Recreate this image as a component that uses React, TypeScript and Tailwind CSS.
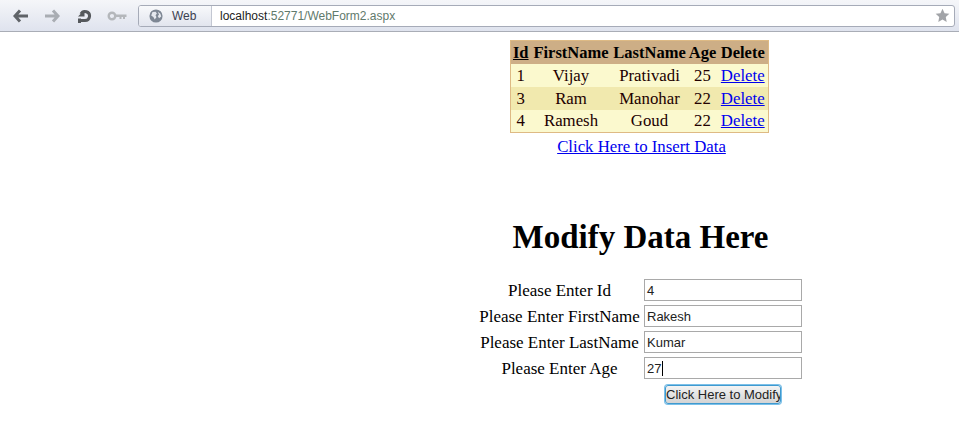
const serif = "font-['Liberation_Serif',serif]";

const rows = [
  { id: "1", first: "Vijay", last: "Prativadi", age: "25", alt: false },
  { id: "3", first: "Ram", last: "Manohar", age: "22", alt: true },
  { id: "4", first: "Ramesh", last: "Goud", age: "22", alt: false },
];

const fields = [
  { label: "Please Enter Id", value: "4" },
  { label: "Please Enter FirstName", value: "Rakesh" },
  { label: "Please Enter LastName", value: "Kumar" },
  { label: "Please Enter Age", value: "27", caret: true },
];

function Toolbar() {
  return (
    <div className="flex h-[32px] items-center border-b border-[#a9adb6] bg-gradient-to-b from-[#f5f6f9] to-[#dfe3ee] pl-[13px] pr-[4px]">
      <svg width="16" height="14" viewBox="0 0 16 14" className="text-[#5f6368]">
        <path d="M7 1.500 2 7l5 5.500M2.500 7H15" fill="none" stroke="currentColor" strokeWidth="3" />
      </svg>
      <svg width="16" height="14" viewBox="0 0 16 14" className="ml-[15px] text-[#a9adb3]">
        <path d="M9 1.500 14 7l-5 5.500M13.500 7H1" fill="none" stroke="currentColor" strokeWidth="3" />
      </svg>
      <svg width="14" height="14" viewBox="0 0 14 14" className="ml-[18px] text-[#55585c]">
        <path d="M3 5A4.500 4.500 0 1 1 7 11.500H2" fill="none" stroke="currentColor" strokeWidth="3" />
        <path d="M6.500 1v6.500H0z" fill="currentColor" />
        <path d="M0 9.500h3v4.500H0z" fill="currentColor" />
      </svg>
      <svg width="20" height="10" viewBox="0 0 20 10" className="ml-[15px] text-[#b4b7bb]">
        <circle cx="5" cy="5" r="3.300" fill="none" stroke="currentColor" strokeWidth="2.400" />
        <path d="M8 3.500h11.500v2.500h-1.500v2h-2V6h-1.500v2h-2V6H8z" fill="currentColor" />
      </svg>
      <div className="ml-[11px] flex h-[22px] flex-1 overflow-hidden rounded-[3px] border border-[#a6abb8] bg-white">
        <div className="flex w-[73px] items-center border-r border-[#c3c7d2] bg-gradient-to-b from-[#f8f9fb] to-[#e2e5ee] pl-[10px] font-['Liberation_Sans',sans-serif] text-[12px] text-[#3b4150]">
          <svg width="14" height="14" viewBox="0 0 16 16" className="shrink-0">
            <circle cx="8" cy="8" r="7.500" fill="#7e8794" />
            <path d="M4 3.500 7.500 3 9 5 7.500 7 8.500 9.500 6.500 12 5 9 2.500 7.500ZM10 3l3 2.500 1 3-2.500 2L10 8l1.500-1.500z" fill="#e5e8ee" />
          </svg>
          <span className="ml-[9px]">Web</span>
        </div>
        <div className="flex flex-1 items-center pl-[8px] font-['Liberation_Sans',sans-serif] text-[12px] text-[#5f7a6c]">
          <span className="text-[#222222]">localhost</span>:52771/WebForm2.aspx
        </div>
        <svg width="15" height="15" viewBox="0 0 16 16" className="mr-[4px] self-center text-[#a2a4a8]">
          <path d="M8 .8l2.200 4.800 5.100.6-3.800 3.500 1 5.100L8 12.300 3.500 14.800l1-5.100L.7 6.200l5.100-.6z" fill="currentColor" />
        </svg>
      </div>
    </div>
  );
}

function DataTable() {
  const link = "text-[#0000ee] underline";
  const cell = "p-0 pt-[1px]";
  return (
    <table className="w-[258px] table-fixed border-collapse border border-[#deba84] bg-[#fff7e7]">
      <colgroup>
        <col className="w-[20px]" />
        <col className="w-[81px]" />
        <col className="w-[76px]" />
        <col className="w-[30px]" />
        <col className="w-[51px]" />
      </colgroup>
      <thead>
        <tr className="h-[23px] bg-[#cdae86] text-[16.500px] font-bold leading-[18px] text-black">
          <th className="whitespace-nowrap p-0 pt-[1px] underline">Id</th>
          <th className="whitespace-nowrap p-0 pt-[1px]">FirstName</th>
          <th className="whitespace-nowrap p-0 pt-[1px]">LastName</th>
          <th className="whitespace-nowrap p-0 pt-[1px]">Age</th>
          <th className="whitespace-nowrap p-0 pt-[1px]">Delete</th>
        </tr>
      </thead>
      <tbody>
        {rows.map((r) => (
          <tr key={r.id} className={`h-[23px] text-center text-[16.800px] leading-[18px] text-[#220000] ${r.alt ? "bg-[#f1e9ae]" : "bg-[#fbf9ce]"}`}>
            <td className={cell}>{r.id}</td>
            <td className={cell}>{r.first}</td>
            <td className={cell}>{r.last}</td>
            <td className={cell}>{r.age}</td>
            <td className={cell}><a href="#" className={link}>Delete</a></td>
          </tr>
        ))}
      </tbody>
    </table>
  );
}

function ModifyForm() {
  return (
    <div className="mt-[22px] grid grid-cols-[165px_158px] gap-x-[2px] gap-y-[4px]">
      {fields.map((f) => (
        <div key={f.label} className="contents">
          <div className="flex h-[22px] items-center justify-center whitespace-nowrap pt-[2px] text-[17px] text-black">{f.label}</div>
          <div className="flex h-[22px] items-center border border-[#a9a9a9] bg-white pl-[2px] pt-[1px] font-['Liberation_Sans',sans-serif] text-[13px] text-[#222222]">
            {f.value}
            {f.caret && <span className="ml-[0.500px] h-[15px] w-px bg-black" />}
          </div>
        </div>
      ))}
      <div />
      <div className="mt-[2px] flex justify-center">
        <button className="h-[19px] w-[116px] overflow-hidden whitespace-nowrap rounded-[3px] border border-[#3f9ad0] bg-gradient-to-b from-[#f4f4f4] to-[#d4d4d4] p-0 font-['Liberation_Sans',sans-serif] text-[13px] leading-[16px] text-[#222222] shadow-[0_0_0_1px_#7cc0e8]">
          Click Here to Modify
        </button>
      </div>
    </div>
  );
}

export default function App() {
  return (
    <div className={`h-[442px] w-[959px] overflow-hidden bg-white ${serif}`}>
      <Toolbar />
      <main className="ml-[320px] flex flex-col items-center pt-[8px]">
        <DataTable />
        <a href="#" className="ml-[4px] mt-[5px] text-[16.800px] leading-[18px] text-[#0000ee] underline">
          Click Here to Insert Data
        </a>
        <h1 className="ml-[2px] mt-[61px] text-[33px] font-bold leading-[40px] text-black">Modify Data Here</h1>
        <ModifyForm />
      </main>
    </div>
  );
}
